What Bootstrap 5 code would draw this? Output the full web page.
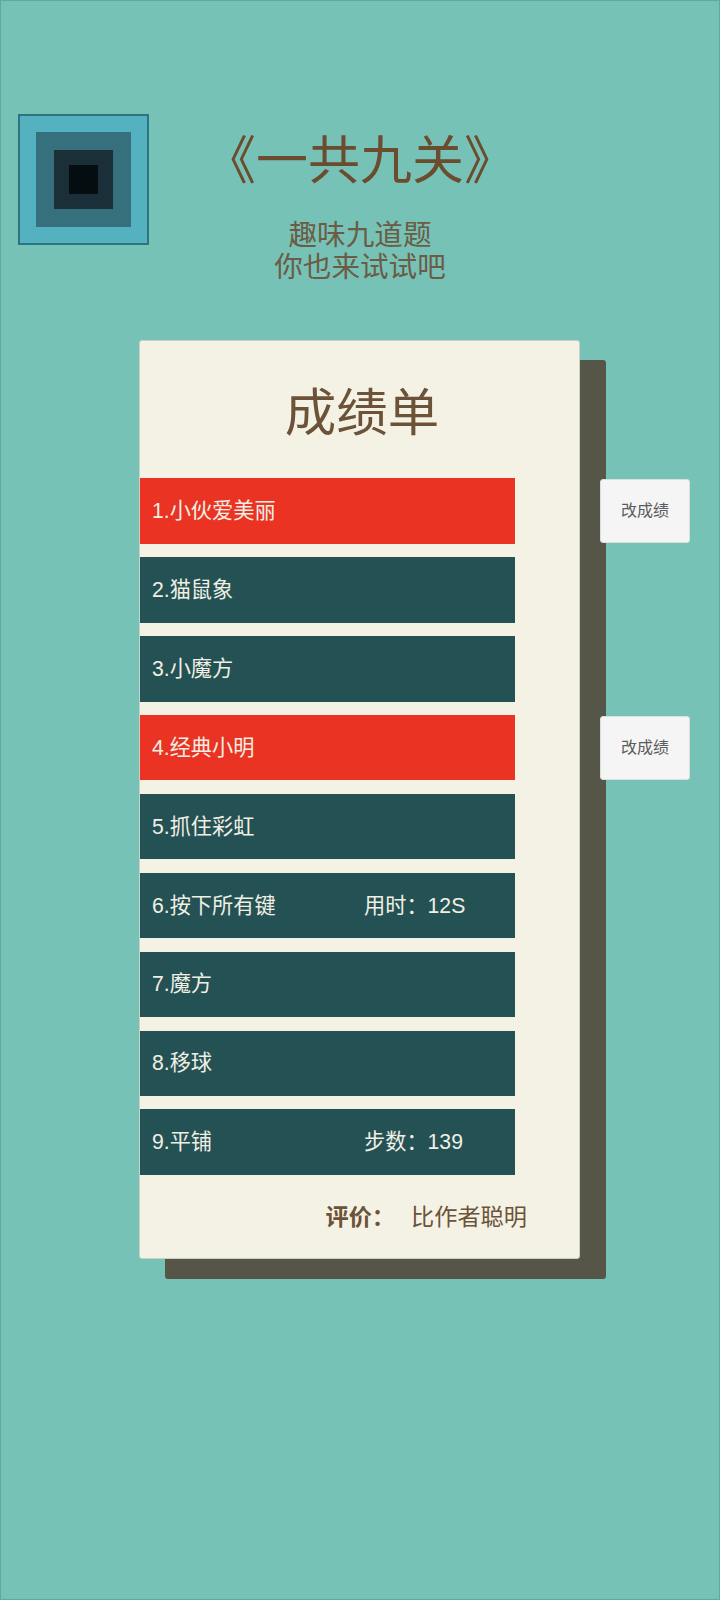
<!DOCTYPE html>
<html lang="zh">
<head>
<meta charset="utf-8">
<title>一共九关</title>
<link href="https://cdn.jsdelivr.net/npm/bootstrap@5.3.0/dist/css/bootstrap.min.css" rel="stylesheet">
<style>
html,body{height:100%;}
body{margin:0;background:#77c2b7;font-family:"Liberation Sans","Noto Sans CJK SC",sans-serif;}
.stage{height:1600px;border:1px solid #62a89f;padding:113px 0 0 17px;color:#6b4c2f;}
.head-row{height:226px;}
.sq{display:flex;align-items:center;justify-content:center;flex:none;}
.sq1{width:131px;height:131px;background:#53b1c0;border:2px solid #2b7480;}
.sq2{width:95px;height:95px;background:#36707c;}
.sq3{width:59px;height:59px;background:#1a2f38;}
.sq4{width:29px;height:29px;background:#050d10;}
.titles{width:420px;margin-left:1px;text-align:center;}
.main-title{font-size:52px;line-height:64px;font-weight:400;color:#6b4c2f;margin:15px 0 0;}
.sub-title{font-size:28.6px;line-height:31.5px;color:#6b5c45;margin:27px 0 0;}
.sheet{width:441px;height:919px;margin-left:121px;background:#f4f2e4;border:1px solid #c9d2c4;border-radius:3px;box-shadow:26px 20px 0 #555548;}
.sheet-title{font-size:51.5px;line-height:60px;font-weight:400;color:#6b5238;text-align:center;margin:0;padding:42px 0 35.3px 5px;}
.lines{width:550px;}
.line{height:65.5px;margin-bottom:13.4px;}
.bar{width:375px;height:65.5px;padding-left:12px;color:#f1efe4;font-size:21.2px;background:#245254;}
.bar.hot{background:#ea3323;}
.bar-name{width:212px;}
.fix-btn{width:90px;height:64px;margin-left:auto;margin-top:1px;background:#f5f5f5;border:1px solid #d8e0dc;border-radius:3px;font-size:16px;color:#5b5b5b;padding:0;}
.verdict{font-size:23.2px;line-height:28px;color:#6b5238;padding:15px 52px 0 0;text-align:right;}
.verdict b{margin-right:16px;}
</style>
</head>
<body>
<div class="stage">
  <div class="d-flex head-row">
    <div class="sq sq1"><div class="sq sq2"><div class="sq sq3"><div class="sq sq4"></div></div></div></div>
    <div class="titles">
      <h1 class="main-title">《一共九关》</h1>
      <p class="sub-title">趣味九道题<br>你也来试试吧</p>
    </div>
  </div>
  <div class="card sheet">
    <h2 class="sheet-title">成绩单</h2>
    <div class="lines">
      <div class="d-flex line"><div class="bar hot d-flex align-items-center"><span class="bar-name">1.小伙爱美丽</span></div><button class="btn fix-btn" type="button">改成绩</button></div>
      <div class="d-flex line"><div class="bar d-flex align-items-center"><span class="bar-name">2.猫鼠象</span></div></div>
      <div class="d-flex line"><div class="bar d-flex align-items-center"><span class="bar-name">3.小魔方</span></div></div>
      <div class="d-flex line"><div class="bar hot d-flex align-items-center"><span class="bar-name">4.经典小明</span></div><button class="btn fix-btn" type="button">改成绩</button></div>
      <div class="d-flex line"><div class="bar d-flex align-items-center"><span class="bar-name">5.抓住彩虹</span></div></div>
      <div class="d-flex line"><div class="bar d-flex align-items-center"><span class="bar-name">6.按下所有键</span><span>用时：12S</span></div></div>
      <div class="d-flex line"><div class="bar d-flex align-items-center"><span class="bar-name">7.魔方</span></div></div>
      <div class="d-flex line"><div class="bar d-flex align-items-center"><span class="bar-name">8.移球</span></div></div>
      <div class="d-flex line"><div class="bar d-flex align-items-center"><span class="bar-name">9.平铺</span><span>步数：139</span></div></div>
    </div>
    <div class="verdict"><b>评价：</b>比作者聪明</div>
  </div>
</div>
</body>
</html>
